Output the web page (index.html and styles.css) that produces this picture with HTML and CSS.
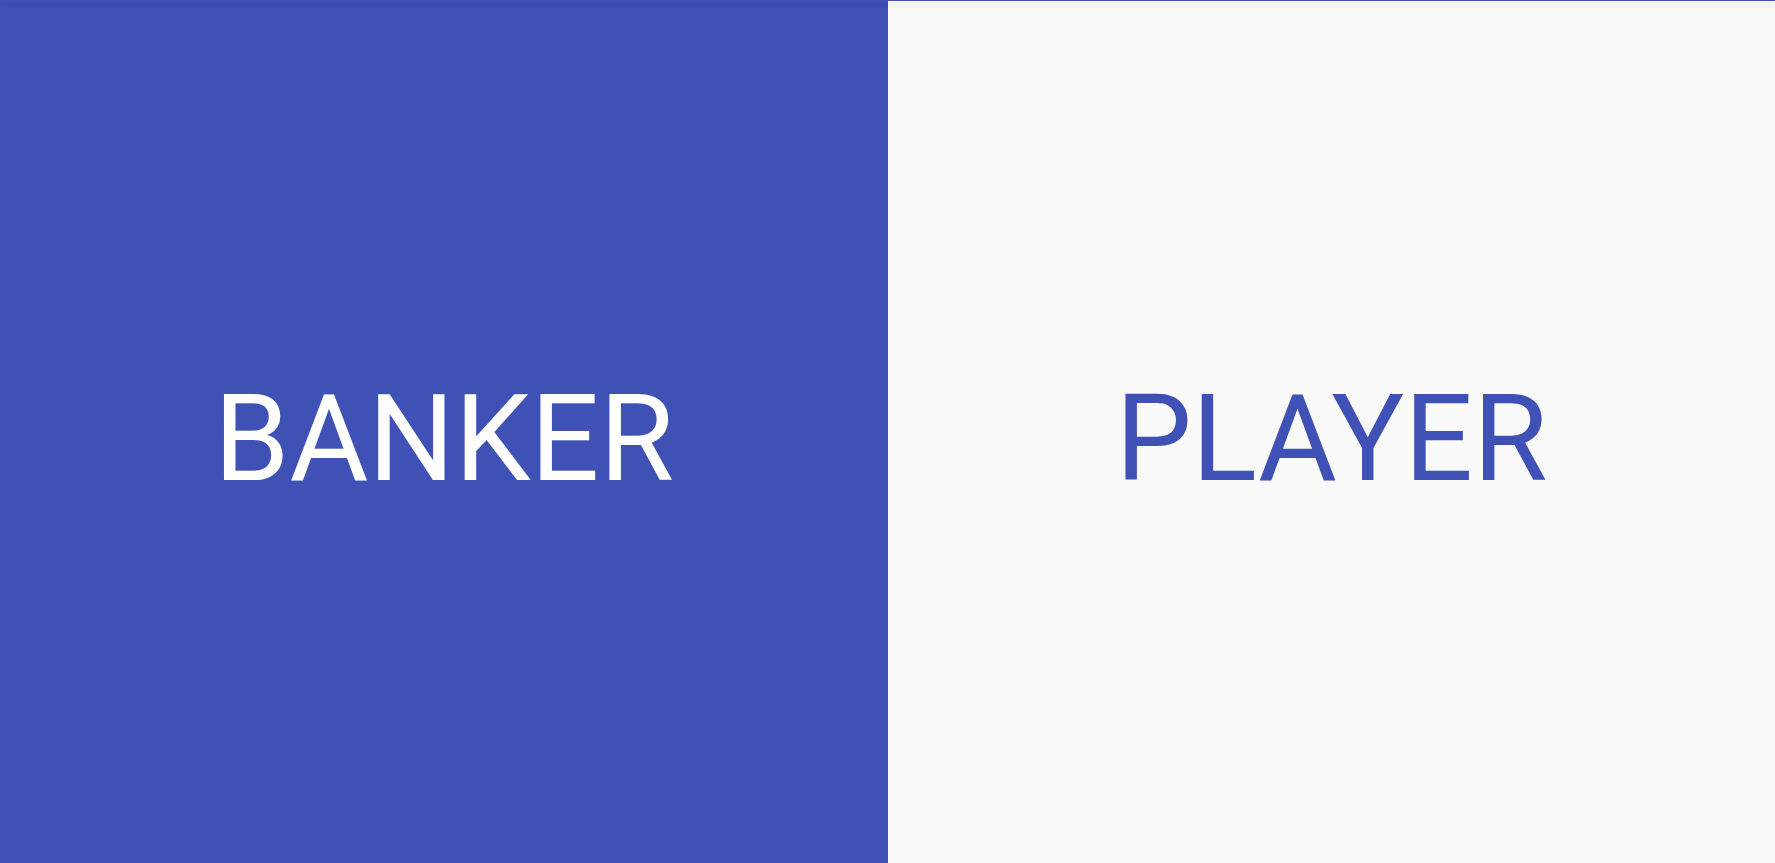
FILE: index.html
```html
<!DOCTYPE html>
<html>
<head>
<meta charset="utf-8">
<link rel="stylesheet" href="styles.css">
</head>
<body>
<div class="app">
  <div class="toolbar"></div>
  <div class="panels">
    <div class="panel banker"><span class="label">BANKER</span></div>
    <div class="panel player"><span class="label">PLAYER</span></div>
  </div>
</div>
</body>
</html>
```
FILE: styles.css
```css
html, body {
  margin: 0;
  padding: 0;
  height: 100%;
}
body {
  font-family: Roboto, "Noto Sans", sans-serif;
  background: #fafafa;
}
.app {
  position: relative;
  height: 100%;
}
.toolbar {
  position: absolute;
  top: 0;
  left: 0;
  right: 0;
  height: 1px;
  background: #3f51b5;
  box-shadow: 0 2px 4px -1px rgba(0,0,0,.2), 0 4px 5px 0 rgba(0,0,0,.14), 0 1px 10px 0 rgba(0,0,0,.12);
  z-index: 2;
}
.panels {
  display: flex;
  height: 100%;
}
.panel {
  display: flex;
  align-items: center;
  justify-content: center;
  padding-top: 16px;
  box-sizing: border-box;
}
.banker {
  width: 888px;
  background: #3f51b5;
  color: #fff;
}
.player {
  flex: 1;
  background: #fafafa;
  color: #3f51b5;
}
.label {
  font-size: 121px;
  font-weight: 400;
  line-height: 1;
}
```
